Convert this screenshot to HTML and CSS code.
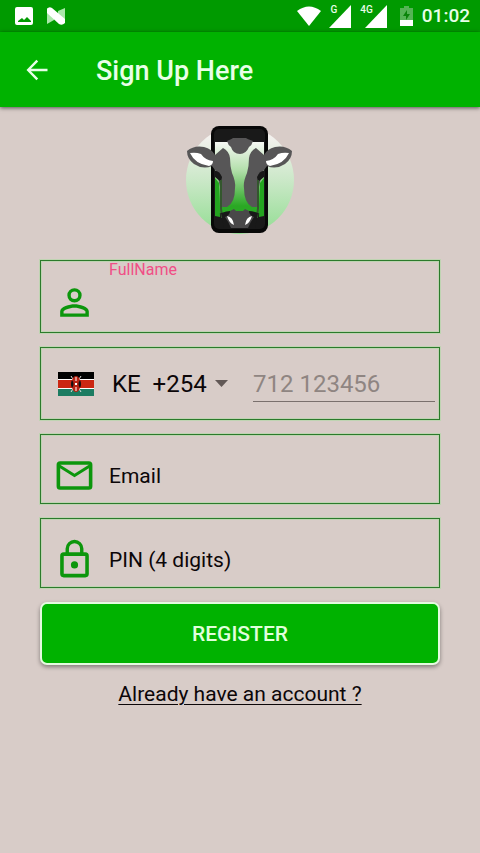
FILE: index.html
```html
<!DOCTYPE html>
<html lang="en">
<head>
<meta charset="utf-8">
<meta name="viewport" content="width=device-width, initial-scale=1">
<title>Sign Up Here</title>
<link rel="stylesheet" href="styles.css">
</head>
<body>
<div class="status-bar">
  <div class="status-group notifications">
    <svg class="icon-notice" viewBox="0 0 20 20" aria-hidden="true"><path fill="#fff" fill-rule="evenodd" d="M3 1h14q2 0 2 2v14q0 2-2 2H3q-2 0-2-2V3q0-2 2-2zM4 16h13v-1l-4-4-3 3-2-2-4 3z"/></svg>
    <svg class="icon-notice" viewBox="0 0 20 20" aria-hidden="true"><path fill="#a9e8a9" d="M1 2v16l7-4V6zM19 2v15l-7-2V5z"/><path fill="#fff" d="M1 3q2-3 5-1l13 11v4q-3 3-6 1L1 7z"/></svg>
  </div>
  <div class="status-group">
    <svg class="icon-wifi" viewBox="0 0 24 20" aria-hidden="true"><path fill="#fff" d="M12 20L0 5Q12-4 24 5z"/></svg>
    <span class="signal"><span class="network">G</span><svg class="icon-signal" viewBox="0 0 22 23" aria-hidden="true"><path fill="#fff" d="M22 0v23H0z"/></svg></span>
    <span class="signal"><span class="network">4G</span><svg class="icon-signal" viewBox="0 0 22 23" aria-hidden="true"><path fill="#fff" d="M22 0v23H0z"/></svg></span>
    <svg class="icon-battery" viewBox="0 0 13 20" aria-hidden="true"><path fill="#55b455" d="M4 0h5v2h4v12H0V2h4z"/><path fill="#fff" d="M0 14h13v6H0z"/><path fill="#0a840a" d="M7 4L3 10h3v4l4-6H7z"/></svg>
    <span class="clock">01:02</span>
  </div>
</div>
<header class="app-bar">
  <button class="back" type="button" aria-label="Back">
    <svg viewBox="0 0 24 24" aria-hidden="true"><path fill="currentColor" d="M21 11H6.800l6.200-6.200L11.500 3.300 3 12l8.500 8.700L13 19.200 6.800 13H21z"/></svg>
  </button>
  <h1>Sign Up Here</h1>
</header>
<main>
  <svg class="logo" viewBox="0 0 108 108" role="img" aria-label="Cow and phone logo">
    <defs>
      <linearGradient id="disc" x1="0" y1="0" x2="0" y2="1"><stop offset=".1" stop-color="#f3f1ee"/><stop offset=".5" stop-color="#cbe8c8"/><stop offset="1" stop-color="#92dd92"/></linearGradient>
      <linearGradient id="screen" x1="0" y1="0" x2="0" y2="1"><stop offset="0" stop-color="#f6f8f4"/><stop offset=".4" stop-color="#b2dfaa"/><stop offset=".9" stop-color="#2aa824"/></linearGradient>
      <g id="side">
        <path fill="#575657" d="M1 25q7-6 17-4 8 2 11 8l8-7q6 3 7 10 0 8 2 15 4 9 3 15 0 15-8 19h-6q-1-10-1-20-1-9-5-17l-3-4q-9 4-18-2Q1 33 1 25z"/>
        <path fill="#fff" d="M4 27q6-1 11 1 4 6 12 7 0 4-4 5-14-2-19-13z"/>
        <path fill="#171717" d="M29 45q4-1 7 6l-1 5-6-5z"/>
        <path fill="none" stroke="#33572d" stroke-width="2" d="M35 54v28l1 10"/>
        <path fill="#23a51f" d="M29 52l4 5 1 34-5-1z"/>
      </g>
    </defs>
    <circle cx="54" cy="54" r="54" fill="url(#disc)"/>
    <rect x="25" y="0" width="57" height="107" rx="8" fill="#080808"/>
    <rect x="28" y="3" width="51" height="100" rx="5" fill="#191919"/>
    <path fill="url(#screen)" d="M29 16h49v71H29z"/>
    <path fill="#575657" d="M41 15q5-2 6-3h13q1 1 7 3-1 4-4 6-3 7-9 7-7 0-9-7-3-2-4-6z"/>
    <use href="#side"/>
    <use href="#side" transform="translate(107 0) scale(-1 1)"/>
    <path fill="#191919" d="M35 87q6-2 9-2h19q3 0 9 2l-3 15H38z"/>
    <path fill="#494849" d="M44 85l4-2 2 2h7l2-2 4 2q0 4 5 6-3 4-6 11H45q-3-7-6-11 5-2 5-6z"/>
    <path fill="#fff" d="M41 90q6 1 7 9-5-2-7-9zm25 0q-6 1-7 9 5-2 7-9z"/>
  </svg>
  <form>
    <div class="field tall">
      <svg class="field-icon" viewBox="0 0 24 24" aria-hidden="true"><path fill="currentColor" fill-rule="evenodd" d="M12 4a4 4 0 1 1 0 8 4 4 0 0 1 0-8zm0 1.900a2.100 2.100 0 1 0 0 4.200 2.100 2.100 0 0 0 0-4.200zM12 13c2.670 0 8 1.340 8 4v3H4v-3c0-2.660 5.330-4 8-4zm0 1.900c-2.970 0-6.100 1.460-6.100 2.100v1.100h12.200V17c0-.640-3.130-2.100-6.100-2.100z"/></svg>
      <div class="named">
        <label for="fullname">FullName</label>
        <input id="fullname" type="text">
      </div>
    </div>
    <div class="field tall phone">
      <svg class="flag" viewBox="0 0 36 24" role="img" aria-label="Kenya"><path fill="#000" d="M0 0h36v8H0z"/><path fill="#fff" d="M0 7h36v10H0z"/><path fill="#cb2713" d="M0 8h36v8H0z"/><path fill="#1c7c62" d="M0 17h36v7H0z"/><path stroke="#ddd" stroke-width="1" d="M13 4l10 16M23 4L13 20"/><ellipse cx="18" cy="12" rx="4.500" ry="8" fill="#b92212"/><path fill="#111" d="M14 8q3 4 0 8-2-4 0-8zm8 0q-3 4 0 8 2-4 0-8z"/><path fill="#fff" d="M17.500 5h1v4h-1zm0 10h1v4h-1zM17 11h2v2h-2z"/></svg>
      <span class="country">
        <select aria-label="Country code"><option>KE&nbsp; +254</option></select>
        <svg class="caret" viewBox="0 0 13 7" aria-hidden="true"><path fill="currentColor" d="M0 0h13L6.500 7z"/></svg>
      </span>
      <input class="number" type="tel" aria-label="Phone number" placeholder="712 123456">
    </div>
    <div class="field">
      <svg class="field-icon" viewBox="0 0 24 24" aria-hidden="true"><path fill="currentColor" fill-rule="evenodd" d="M4 4h16a2 2 0 0 1 2 2v12a2 2 0 0 1-2 2H4a2 2 0 0 1-2-2V6a2 2 0 0 1 2-2zm0 4v10h16V8l-8 5zm0-2l8 5 8-5z"/></svg>
      <input class="low" type="email" aria-label="Email" placeholder="Email">
    </div>
    <div class="field">
      <svg class="field-icon" viewBox="0 0 24 24" aria-hidden="true"><path fill="currentColor" fill-rule="evenodd" d="M7 8V6a5 5 0 0 1 10 0v2h1a2 2 0 0 1 2 2v10a2 2 0 0 1-2 2H6a2 2 0 0 1-2-2V10a2 2 0 0 1 2-2zm1.900 0h6.200V6a3.100 3.100 0 0 0-6.200 0zM6 10v10h12V10z"/><circle cx="12" cy="15" r="2" fill="currentColor"/></svg>
      <input class="low" type="password" aria-label="PIN (4 digits)" placeholder="PIN (4 digits)">
    </div>
    <button class="register" type="submit">REGISTER</button>
  </form>
  <a class="login" href="#">Already have an account ?</a>
</main>
</body>
</html>
```
FILE: styles.css
```css
* {
  box-sizing: border-box;
}

body {
  margin: 0;
  min-height: 100vh;
  background: #d8ccc8;
  color: #0c0608;
  font-family: Roboto, "Liberation Sans", sans-serif;
  font-size: 21px;
}

svg {
  display: block;
  flex: none;
}

input,
select,
button {
  font: inherit;
  color: inherit;
  margin: 0;
  padding: 0;
  border: 0;
  border-radius: 0;
  background: none;
}

.status-bar {
  display: flex;
  justify-content: space-between;
  height: 32px;
  padding: 0 10px 0 14px;
  background: #009a00;
  color: #e8ffe8;
}

.status-group {
  display: flex;
  align-items: center;
}

.notifications {
  gap: 12px;
}

.icon-notice {
  width: 20px;
  height: 20px;
}

.icon-wifi {
  width: 24px;
  height: 20px;
}

.signal {
  display: flex;
  align-items: flex-start;
  margin-left: 9px;
}

.network {
  margin-right: -8px;
  font-size: 10px;
  font-weight: 500;
  line-height: 10px;
}

.icon-signal {
  width: 22px;
  height: 23px;
}

.icon-battery {
  width: 13px;
  height: 20px;
  margin: 0 9px 0 13px;
}

.clock {
  font-size: 19px;
  font-weight: 500;
  line-height: 32px;
}

.app-bar {
  display: flex;
  align-items: center;
  gap: 32px;
  height: 75px;
  padding: 0 10px;
  background: #00b200;
  color: #e8ffe8;
  box-shadow: 0 1px 4px rgba(0, 0, 0, 0.6);
}

.back {
  display: grid;
  place-items: center;
  width: 54px;
  height: 54px;
}

.back svg {
  width: 28px;
  height: 28px;
}

h1 {
  margin: 2px 0 0;
  font-size: 27px;
  font-weight: 500;
}

main {
  display: flex;
  flex-direction: column;
  align-items: center;
  padding: 19px 40px;
}

.logo {
  width: 108px;
  height: 108px;
}

form {
  display: flex;
  flex-direction: column;
  gap: 14px;
  width: 100%;
  margin-top: 26px;
}

.field {
  display: flex;
  align-items: center;
  gap: 13px;
  height: 70px;
  padding: 0 4px 0 12px;
  border: 1px solid #2c7a2c;
  box-shadow: 0 0 0 1px #bfd4b2, inset 0 0 0 1px #bfd4b2;
  color: #0c960c;
}

.tall {
  height: 73px;
}

.field-icon {
  width: 43px;
  height: 43px;
  margin-top: 12px;
}

.low {
  margin-top: 14px;
}

.field input {
  flex: 1;
  min-width: 0;
  outline: 0;
  color: #0c0608;
}

.field input::placeholder {
  color: #0c0608;
  opacity: 1;
}

.named {
  display: flex;
  flex: 1;
  flex-direction: column;
  align-self: stretch;
}

.named label {
  color: #f04e86;
  font-size: 16px;
  line-height: 18px;
}

.phone {
  gap: 18px;
  padding-left: 17px;
}

.flag {
  width: 36px;
  height: 24px;
}

.country {
  display: flex;
  align-items: center;
  gap: 8px;
  color: #0c0608;
  font-size: 24px;
}

.country select {
  appearance: none;
  outline: 0;
}

.caret {
  width: 13px;
  height: 7px;
  color: #625856;
}

.phone .number {
  height: 36px;
  margin-left: 7px;
  padding-top: 2px;
  border-bottom: 1px solid #7a706d;
  font-size: 24px;
}

.phone .number::placeholder {
  color: #8f8582;
}

.register {
  height: 63px;
  border: 2px solid #e4fbdf;
  border-radius: 7px;
  background: #00b200;
  color: #e0ffdc;
  font-weight: 500;
  box-shadow: 0 2px 4px rgba(0, 0, 0, 0.4);
}

.login {
  margin-top: 16px;
  color: inherit;
  line-height: 26px;
  text-decoration-thickness: 1px;
  text-underline-offset: 3px;
}
```
